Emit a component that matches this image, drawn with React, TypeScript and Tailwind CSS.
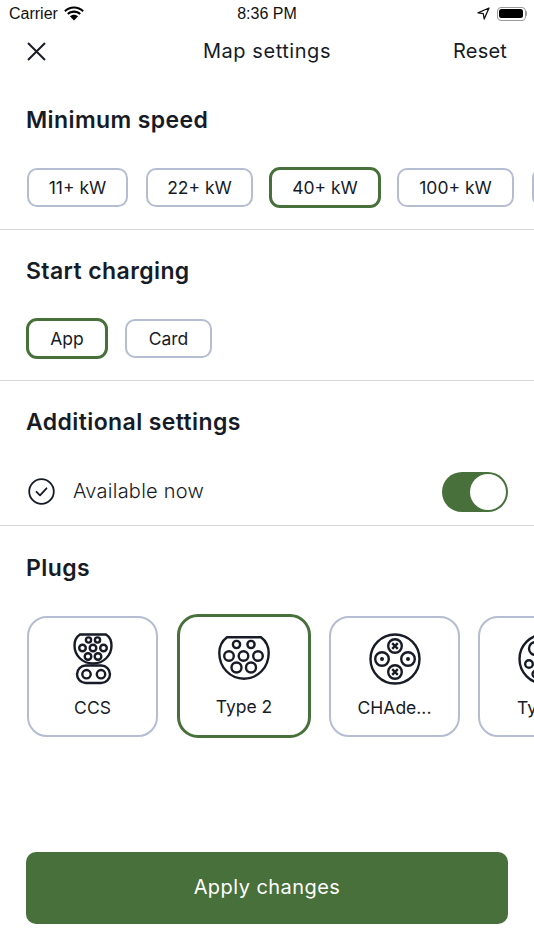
const FONT = "font-['Inter',sans-serif]";
const INK = 'text-[#161b26]';

const SPEEDS = [
  { label: '11+ kW', width: 'w-[101px]' },
  { label: '22+ kW', width: 'w-[107px]' },
  { label: '40+ kW', width: 'w-[112px] -mx-[2px]', selected: true },
  { label: '100+ kW', width: 'w-[117px]' },
  { label: '', width: 'w-[117px]' },
];

const Pill = ({ label, width, selected }: { label: string; width: string; selected?: boolean }) => (
  <div
    className={`flex shrink-0 items-center justify-center bg-white pt-[1px] text-[17.5px] ${INK} ${width} ${
      selected
        ? 'h-[41px] rounded-[11px] border-[3px] border-[#47703a]'
        : 'h-[39px] rounded-[10px] border-2 border-[#b5bdd3]'
    }`}
  >
    {label}
  </div>
);

const Divider = () => <div className="h-px w-full bg-[#d8d8d8]" />;

const CcsIcon = () => (
  <svg width="40" height="52" viewBox="0 0 40 52" fill="none" stroke="#161b26" strokeWidth="2.4">
    <path d="M7 1.500h26c3 2 5.500 6 5.500 11 0 10-8 18-18.500 18S1.500 22.500 1.500 12.500c0-5 2.500-9 5.500-11z" />
    <rect x="4" y="32.500" width="33" height="17.500" rx="8.750" />
    <circle cx="15.500" cy="7" r="2.600" />
    <circle cx="24.500" cy="7" r="2.600" />
    <circle cx="9.500" cy="15" r="3.300" />
    <circle cx="20" cy="15" r="3.300" />
    <circle cx="30.500" cy="15" r="3.300" />
    <circle cx="15" cy="23.500" r="3.300" />
    <circle cx="25" cy="23.500" r="3.300" />
    <circle cx="13.500" cy="41.200" r="4.200" />
    <circle cx="28" cy="41.200" r="4.200" />
  </svg>
);

const Type2Icon = () => (
  <svg width="52" height="44" viewBox="0 0 52 44" fill="none" stroke="#161b26" strokeWidth="2.4">
    <path d="M9 1.300h34c4 3 7.700 8.500 7.700 15.700 0 14.500-11 25.700-24.700 25.700S1.300 31.500 1.300 17C1.300 9.800 5 4.300 9 1.300z" />
    <circle cx="18.500" cy="8.500" r="3.600" />
    <circle cx="33" cy="8.500" r="3.600" />
    <circle cx="11" cy="20" r="4.800" />
    <circle cx="25.500" cy="20" r="4.800" />
    <circle cx="40" cy="20" r="4.800" />
    <circle cx="18.500" cy="31.500" r="5" />
    <circle cx="33" cy="31.500" r="5" />
  </svg>
);

const Cross = ({ cx, cy }: { cx: number; cy: number }) => (
  <>
    <circle cx={cx} cy={cy} r="6.800" />
    <path d={`M${cx - 2.800} ${cy - 2.800}l5.600 5.600M${cx + 2.800} ${cy - 2.800}l-5.600 5.600`} />
  </>
);

const Dot = ({ cx, cy }: { cx: number; cy: number }) => (
  <>
    <circle cx={cx} cy={cy} r="6.800" />
    <circle cx={cx} cy={cy} r="2" fill="#161b26" stroke="none" />
  </>
);

const ChademoIcon = () => (
  <svg width="52" height="52" viewBox="0 0 52 52" fill="none" stroke="#161b26" strokeWidth="2.4">
    <circle cx="26" cy="26" r="24.500" />
    <Cross cx={26} cy={13} />
    <Cross cx={26} cy={39} />
    <Dot cx={13} cy={26} />
    <Dot cx={39} cy={26} />
  </svg>
);

const Type1Icon = () => (
  <svg width="52" height="52" viewBox="0 0 52 52" fill="none" stroke="#161b26" strokeWidth="2.4">
    <circle cx="26" cy="26" r="24.500" />
    <circle cx="17.500" cy="15.500" r="6.500" />
    <circle cx="34.500" cy="15.500" r="6.500" />
    <circle cx="11" cy="31" r="3.800" />
    <circle cx="41" cy="31" r="3.800" />
    <circle cx="18" cy="41" r="3.500" />
    <circle cx="34" cy="41" r="3.500" />
  </svg>
);

const PlugCard = ({
  label,
  icon,
  selected,
}: {
  label: string;
  icon: React.ReactNode;
  selected?: boolean;
}) => (
  <div
    className={`flex shrink-0 flex-col items-center bg-white ${
      selected
        ? 'ml-px h-[124px] w-[134px] rounded-[21px] border-[3px] border-[#47703a]'
        : 'h-[121px] w-[131px] rounded-[20px] border-2 border-[#b5bdd3]'
    }`}
  >
    <div className="flex h-[79px] w-full items-center justify-center pt-[3px]">{icon}</div>
    <div className={`text-[17.5px] leading-[22px] ${INK}`}>{label}</div>
  </div>
);

export default function App() {
  return (
    <div className={`flex h-[950px] w-[534px] flex-col overflow-hidden bg-white ${FONT} ${INK}`}>
      {/* Status bar */}
      <div className="relative flex h-[27px] shrink-0 items-center justify-between pl-[9px] pr-[7px] font-['Liberation_Sans',sans-serif] text-[16px] text-[#111]">
        <div className="flex items-center gap-[6px]">
          <span>Carrier</span>
          <svg width="20" height="15" viewBox="0 0 20 15" fill="#000">
            <path d="M10 2.600c3.300 0 6.300 1.300 8.500 3.400l1.300-1.500C17.200 2 13.800.5 10 .5S2.800 2 .2 4.500L1.500 6C3.700 3.900 6.700 2.600 10 2.600z" />
            <path d="M10 6.700c2.100 0 4 .8 5.500 2.100l1.400-1.500C15 5.600 12.600 4.600 10 4.600S5 5.600 3.100 7.300l1.400 1.500C6 7.500 7.900 6.700 10 6.700z" />
            <path d="M10 8.700c-1.600 0-3 .6-4.100 1.600L10 14.500l4.100-4.200C13 9.300 11.600 8.700 10 8.700z" />
          </svg>
        </div>
        <span className="absolute inset-x-0 text-center font-medium">8:36 PM</span>
        <div className="flex items-center gap-[7px]">
          <svg width="13" height="13" viewBox="0 0 13 13" fill="none" stroke="#111" strokeWidth="1.300" strokeLinejoin="round">
            <path d="M12 1L1 5.800l5.300.9.900 5.300z" />
          </svg>
          <div className="flex items-center">
            <div className="h-[14px] w-[29px] rounded-[4px] border border-[#999] p-[1.5px]">
              <div className="h-full w-full rounded-[2.5px] bg-black" />
            </div>
            <div className="h-[5px] w-[1.5px] rounded-r-sm bg-[#999]" />
          </div>
        </div>
      </div>

      {/* Header */}
      <div className="relative flex h-[48px] shrink-0 items-center justify-between pl-[27px] pr-[27px]">
        <svg width="19" height="19" viewBox="0 0 19 19" fill="none" stroke="#161b26" strokeWidth="2">
          <path d="M1 1l17 17M18 1L1 18" />
        </svg>
        <span className="absolute inset-x-0 text-center text-[20px] tracking-[0.55px]">Map settings</span>
        <span className="text-[20px] tracking-[0.2px]">Reset</span>
      </div>

      {/* Minimum speed */}
      <div className="shrink-0 pt-[30px]">
        <h2 className="pl-[26px] text-[23px] leading-[30px] font-semibold tracking-[0.4px]">Minimum speed</h2>
        <div className="mt-[32px] flex h-[41px] items-center overflow-hidden pl-[27px]">
          <div className="flex items-center gap-[18px]">
            {SPEEDS.map((s) => (
              <Pill key={s.width} label={s.label} width={s.width} selected={s.selected} />
            ))}
          </div>
        </div>
        <div className="mt-[21px]">
          <Divider />
        </div>
      </div>

      {/* Start charging */}
      <div className="shrink-0 pt-[26px]">
        <h2 className="pl-[26px] text-[23px] leading-[30px] font-semibold tracking-[0.4px]">Start charging</h2>
        <div className="mt-[32px] flex h-[41px] items-center gap-[17px] pl-[26px]">
          <Pill label="App" width="w-[82px]" selected />
          <Pill label="Card" width="w-[87px]" />
        </div>
        <div className="mt-[21px]">
          <Divider />
        </div>
      </div>

      {/* Additional settings */}
      <div className="shrink-0 pt-[26px]">
        <h2 className="pl-[26px] text-[23px] leading-[30px] font-semibold tracking-[0.4px]">Additional settings</h2>
        <div className="mt-[29px] flex h-[50px] items-center justify-between pl-[28px] pr-[26px]">
          <div className="flex items-center gap-[18px]">
            <svg width="27" height="27" viewBox="0 0 27 27" fill="none" stroke="#161b26" strokeWidth="1.8">
              <circle cx="13.500" cy="13.500" r="12.300" />
              <path d="M8.500 13.800l3.500 3.500 6.500-7" strokeLinecap="round" strokeLinejoin="round" />
            </svg>
            <span className="text-[20px] font-light tracking-[0.25px]">Available now</span>
          </div>
          <div className="mt-[2px] flex h-[40px] w-[66px] items-center justify-end rounded-full bg-[#47703a] pr-[2px]">
            <div className="h-[36px] w-[36px] rounded-full bg-white" />
          </div>
        </div>
        <div className="mt-[9px]">
          <Divider />
        </div>
      </div>

      {/* Plugs */}
      <div className="shrink-0 pt-[27px]">
        <h2 className="pl-[26px] text-[23px] leading-[30px] font-semibold tracking-[0.4px]">Plugs</h2>
        <div className="mt-[31px] flex h-[124px] items-center gap-[18px] overflow-hidden pl-[27px]">
          <PlugCard label="CCS" icon={<CcsIcon />} />
          <PlugCard label="Type 2" icon={<Type2Icon />} selected />
          <PlugCard label="CHAde..." icon={<ChademoIcon />} />
          <PlugCard label="Type 1" icon={<Type1Icon />} />
        </div>
      </div>

      {/* Apply */}
      <div className="mt-auto px-[26px] pb-[26px]">
        <div className="flex h-[72px] items-center justify-center rounded-[10px] bg-[#47703a] pb-[2px] text-[20px] tracking-[0.45px] text-white">
          Apply changes
        </div>
      </div>
    </div>
  );
}
